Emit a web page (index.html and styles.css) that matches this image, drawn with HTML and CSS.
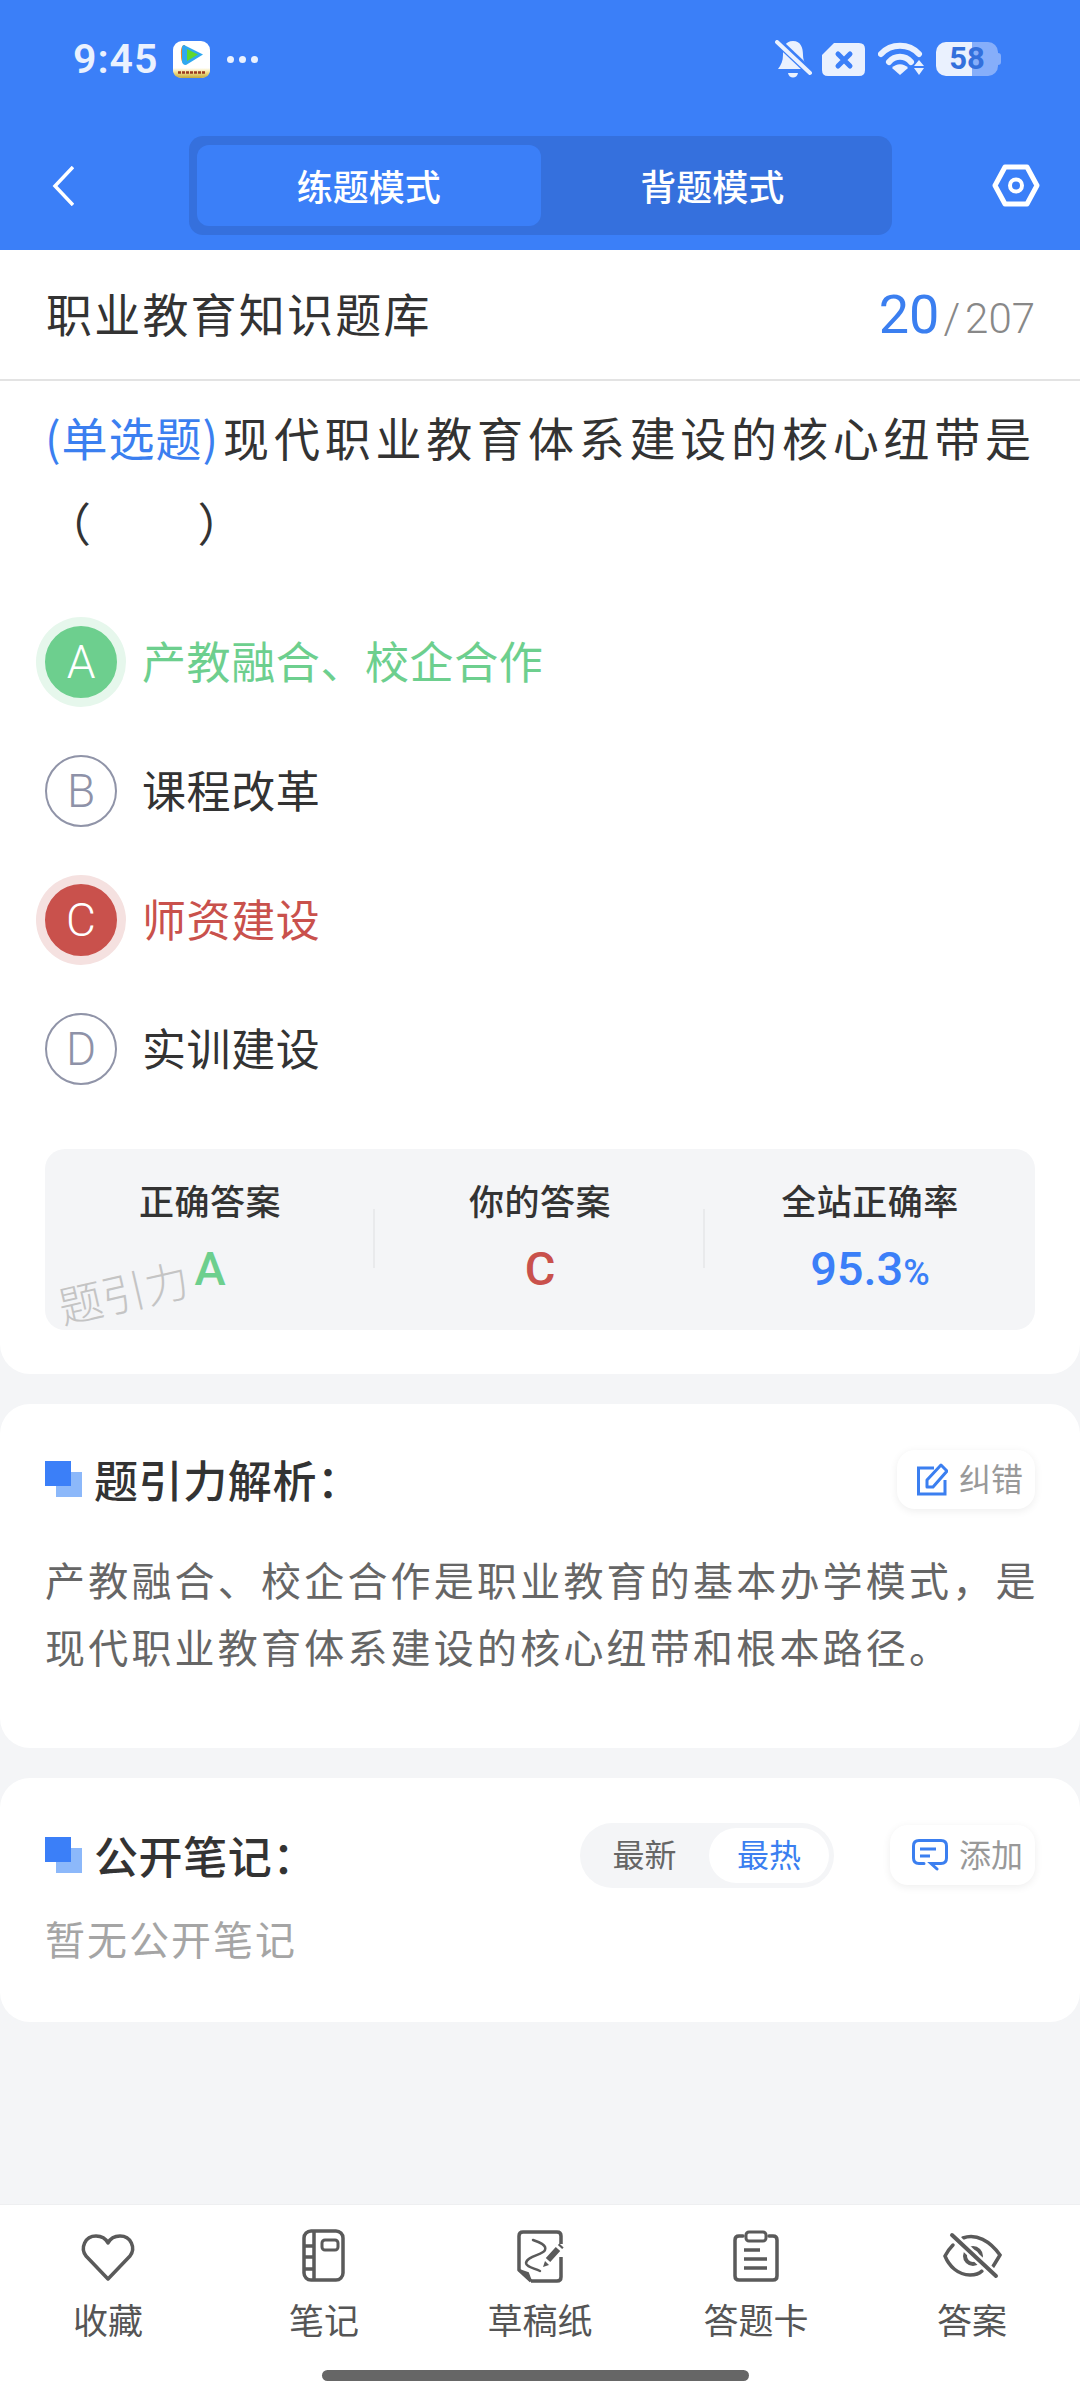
FILE: index.html
```html
<!DOCTYPE html>
<html lang="zh-CN">
<head>
	<meta charset="utf-8">
	<title>职业教育知识题库</title>
	<link rel="stylesheet" href="styles.css">
</head>
<body>
<div class="page">
	<div class="header">
		<div class="status-bar">
			<span class="time">9:45</span>
			<svg class="app-icon" viewBox="0 0 37 37">
				<defs>
					<linearGradient id="strip" x1="0" y1="0" x2="0" y2="1">
						<stop offset="0" stop-color="#fff"/>
						<stop offset="0.45" stop-color="#f3e08a"/>
						<stop offset="1" stop-color="#c2a83c"/>
					</linearGradient>
				</defs>
				<rect width="37" height="37" rx="9" fill="#fff"/>
				<path d="M0 27H37V29C37 34 33 37 28 37H9C4 37 0 34 0 29Z" fill="url(#strip)"/>
				<path d="M5 31.500H32" stroke="#9a3a20" stroke-width="2.500" stroke-dasharray="3 1"/>
				<path d="M12 4C7 4 8 12 8 14C8 18 8 23 14 23Z" fill="#f08a24"/>
				<path d="M11 4L30 13.5L13 24C10 24 9 22 9 20V7C9 5 10 4 11 4Z" fill="#2fa8f0"/>
				<path d="M14 8L25 13.5L14 20Z" fill="#5fd82e"/>
			</svg>
			<div class="status-dots"><i></i><i></i><i></i></div>
			<div class="status-right">
				<svg class="bell-icon" viewBox="0 0 37 39">
					<path d="M18 1C26 1 28 8 28 15C28 21 31 25 34 29H3C6 25 8 21 8 15C8 8 10 1 18 1Z" fill="#eaf1fe"/>
					<path d="M13 33H23C22 39 14 39 13 33Z" fill="#eaf1fe"/>
					<path d="M1 0L37 34" stroke="#3b7ff8" stroke-width="8"/>
					<path d="M2 2L35 33" stroke="#eaf1fe" stroke-width="4" stroke-linecap="round"/>
				</svg>
				<svg class="sim-icon" viewBox="0 0 43 33">
					<path d="M12 0H37Q43 0 43 6V27Q43 33 37 33H6Q0 33 0 27V12Z" fill="#eaf1fe"/>
					<path d="M16 11L28 23M28 11L16 23" stroke="#3b7ff8" stroke-width="5" stroke-linecap="round"/>
				</svg>
				<svg class="wifi-icon" viewBox="0 0 47 34">
					<path d="M3 12C13 1 31 1 41 12" fill="none" stroke="#eaf1fe" stroke-width="6" stroke-linecap="round"/>
					<path d="M11 20C17 13 27 13 33 20" fill="none" stroke="#eaf1fe" stroke-width="6" stroke-linecap="round"/>
					<path d="M22 33L14 26C18 21 26 21 30 26Z" fill="#eaf1fe"/>
					<path d="M41 18L46 24H36ZM36 26H46L41 33Z" fill="#eaf1fe"/>
				</svg>
				<div class="battery">58</div>
			</div>
		</div>
		<div class="nav-bar">
			<svg class="back-icon" viewBox="0 0 22 40">
				<path d="M21 1L3 20L21 39" fill="none" stroke="#fff" stroke-width="3.5"/>
			</svg>
			<div class="mode-switch">
				<div class="mode-item active">练题模式</div>
				<div class="mode-item">背题模式</div>
			</div>
			<svg class="settings-icon" viewBox="0 0 48 43">
				<path d="M13 3H35L45 21.5L35 40H13L3 21.5Z" fill="none" stroke="#fff" stroke-width="5" stroke-linejoin="round"/>
				<circle cx="24" cy="21.5" r="6" fill="none" stroke="#fff" stroke-width="4"/>
			</svg>
		</div>
	</div>

	<div class="info-row">
		<div class="bank-name">职业教育知识题库</div>
		<div class="progress"><span class="progress-now">20</span><span class="progress-sep">/</span><span class="progress-total">207</span></div>
	</div>

	<div class="card question-card">
		<div class="question"><span class="question-type">(单选题)</span>现代职业教育体系建设的核心纽带是<br>（　　）</div>
		<div class="options">
			<div class="option right">
				<div class="option-mark">A</div>
				<div class="option-text">产教融合、校企合作</div>
			</div>
			<div class="option">
				<div class="option-mark">B</div>
				<div class="option-text">课程改革</div>
			</div>
			<div class="option wrong">
				<div class="option-mark">C</div>
				<div class="option-text">师资建设</div>
			</div>
			<div class="option">
				<div class="option-mark">D</div>
				<div class="option-text">实训建设</div>
			</div>
		</div>
		<div class="stats">
			<div class="stat">
				<div class="stat-label">正确答案</div>
				<div class="stat-value green">A</div>
			</div>
			<div class="stat">
				<div class="stat-label">你的答案</div>
				<div class="stat-value red">C</div>
			</div>
			<div class="stat">
				<div class="stat-label">全站正确率</div>
				<div class="stat-value blue">95.3<small>%</small></div>
			</div>
			<div class="watermark">题引力</div>
		</div>
	</div>

	<div class="card analysis-card">
		<div class="section-head">
			<div class="section-title">题引力解析：</div>
			<div class="small-btn">
				<svg class="edit-icon" viewBox="0 0 31 34">
					<path d="M17 6H1.5V32H28V18" fill="none" stroke="#3b7ff0" stroke-width="3"/>
					<path d="M10 25V18L24 3L30 9L16 25Z" fill="none" stroke="#3b7ff0" stroke-width="3" stroke-linejoin="round"/>
				</svg>
				<span>纠错</span>
			</div>
		</div>
		<p class="analysis-text">产教融合、校企合作是职业教育的基本办学模式，是现代职业教育体系建设的核心纽带和根本路径。</p>
	</div>

	<div class="card notes-card">
		<div class="section-head">
			<div class="section-title">公开笔记：</div>
			<div class="sort-switch">
				<div class="sort-item">最新</div>
				<div class="sort-item active">最热</div>
			</div>
			<div class="small-btn add-btn">
				<svg class="add-icon" viewBox="0 0 36 32">
					<path d="M7 1.5H29Q34.500 1.500 34.500 7V19Q34.500 24.500 29 24.500H19L25 30M12 24.500H7Q1.500 24.500 1.500 19V7Q1.500 1.500 7 1.500" fill="none" stroke="#3b7ff0" stroke-width="3" stroke-linecap="round"/>
					<path d="M8 10H24M8 17H18" stroke="#3b7ff0" stroke-width="3"/>
				</svg>
				<span>添加</span>
			</div>
		</div>
		<div class="notes-empty">暂无公开笔记</div>
	</div>

	<div class="spacer"></div>

	<div class="tab-bar">
		<div class="tabs">
			<div class="tab">
				<svg class="tab-icon" viewBox="0 0 60 56">
					<path d="M30 50L8 27C2 19 7 7 18 7C24 7 28 10 30 14C32 10 36 7 42 7C53 7 58 19 52 27Z" fill="none" stroke="#5a5a5a" stroke-width="3.500" stroke-linejoin="round"/>
				</svg>
				<div class="tab-label">收藏</div>
			</div>
			<div class="tab">
				<svg class="tab-icon" viewBox="0 0 60 56">
					<rect x="10" y="2" width="39" height="49" rx="7" fill="none" stroke="#5a5a5a" stroke-width="3.500"/>
					<path d="M20 2V51M10 17H20M10 28H20M10 40H20" stroke="#5a5a5a" stroke-width="3.500"/>
					<rect x="28" y="11" width="16" height="10" rx="3" fill="none" stroke="#5a5a5a" stroke-width="3"/>
				</svg>
				<div class="tab-label">笔记</div>
			</div>
			<div class="tab">
				<svg class="tab-icon" viewBox="0 0 60 56">
					<path d="M21 52H47Q51 52 51 48V28M51 15V7Q51 3 47 3H13Q9 3 9 7V41L21 52" fill="none" stroke="#5a5a5a" stroke-width="3.500" stroke-linejoin="round"/>
					<path d="M9 41L18 44L21 52Z" fill="#5a5a5a" stroke="#5a5a5a" stroke-width="2"/>
					<path d="M23 11C29 13 37 16 35 21C33 26 17 27 16 34C16 38 24 39 30 42" fill="none" stroke="#5a5a5a" stroke-width="2.500" stroke-linecap="round"/>
					<path d="M38 31L48 20M50 18L51.500 16.500" stroke="#5a5a5a" stroke-width="6"/>
					<path d="M33 38L35 32L39 36Z" fill="#5a5a5a"/>
				</svg>
				<div class="tab-label">草稿纸</div>
			</div>
			<div class="tab">
				<svg class="tab-icon" viewBox="0 0 60 56">
					<path d="M17 7H13Q9 7 9 11V47Q9 51 13 51H47Q51 51 51 47V11Q51 7 47 7H43" fill="none" stroke="#5a5a5a" stroke-width="3.500" stroke-linecap="round"/>
					<rect x="20" y="3" width="20" height="9" rx="3" fill="none" stroke="#5a5a5a" stroke-width="3"/>
					<path d="M18 21H34M18 30H41M18 39H41" stroke="#5a5a5a" stroke-width="3.500"/>
				</svg>
				<div class="tab-label">答题卡</div>
			</div>
			<div class="tab">
				<svg class="tab-icon" viewBox="0 0 60 56">
					<path d="M21 9C34 4 48 12 58 26C55 31 52 36 50 39" fill="none" stroke="#5a5a5a" stroke-width="3.500" stroke-linecap="round"/>
					<path d="M11 16C8 19 5 23 3 27C7 37 16 46 28 46C32 46 37 45 40 42" fill="none" stroke="#5a5a5a" stroke-width="3.500" stroke-linecap="round"/>
					<circle cx="31" cy="27" r="8" fill="none" stroke="#5a5a5a" stroke-width="4"/>
					<path d="M10 6L54 47" stroke="#fff" stroke-width="9"/>
					<path d="M10 6L54 47" stroke="#5a5a5a" stroke-width="4" stroke-linecap="round"/>
				</svg>
				<div class="tab-label">答案</div>
			</div>
		</div>
		<div class="home-bar"></div>
	</div>
</div>
</body>
</html>
```
FILE: styles.css
```css
* {
	box-sizing: border-box;
}

body {
	margin: 0;
	background-color: #f4f5f7;
	font-family: "Noto Sans CJK SC", "Noto Sans", sans-serif;
	color: #333;
}

.page {
	display: flex;
	flex-direction: column;
	width: 1080px;
	height: 2400px;
}

/* header */
.header {
	height: 250px;
	background-color: #3b7ff8;
}

.status-bar {
	display: flex;
	align-items: center;
	height: 136px;
	padding: 0 80px 18px 73px;
	color: #eaf1fe;
}

.time {
	font-family: Roboto, sans-serif;
	font-size: 41px;
	font-weight: 600;
	letter-spacing: 1px;
	line-height: 41px;
}

.app-icon {
	width: 37px;
	height: 37px;
	margin-left: 15px;
}

.status-dots {
	display: flex;
	gap: 5px;
	margin-left: 17px;
}

.status-dots i {
	width: 7px;
	height: 7px;
	border-radius: 50%;
	background-color: #eaf1fe;
}

.status-right {
	display: flex;
	align-items: center;
	margin-left: auto;
}

.bell-icon {
	width: 37px;
	height: 39px;
}

.sim-icon {
	width: 43px;
	height: 33px;
	margin-left: 10px;
}

.wifi-icon {
	width: 47px;
	height: 34px;
	margin-left: 13px;
}

.battery {
	position: relative;
	width: 62px;
	height: 34px;
	margin-left: 11px;
	margin-right: 2px;
	border-radius: 10px;
	background: linear-gradient(to right, #eaf1fe 36px, #86aefa 36px);
	font-family: Roboto, sans-serif;
	font-size: 31px;
	font-weight: 700;
	line-height: 34px;
	text-align: center;
	color: #3370dc;
}

.battery::after {
	content: "";
	position: absolute;
	top: 11px;
	right: -3px;
	width: 3px;
	height: 12px;
	border-radius: 0 3px 3px 0;
	background-color: #86aefa;
}

.nav-bar {
	display: flex;
	align-items: center;
	padding: 0 40px 0 52px;
}

.back-icon {
	width: 22px;
	height: 40px;
}

.mode-switch {
	display: flex;
	width: 703px;
	height: 99px;
	margin-left: 115px;
	padding: 9px 8px;
	border-radius: 14px;
	background-color: #3570dd;
}

.mode-item {
	flex: 1;
	border-radius: 12px;
	font-size: 36px;
	font-weight: 500;
	line-height: 81px;
	text-align: center;
	color: #fff;
}

.mode-item.active {
	background-color: #3b7ff8;
}

.settings-icon {
	width: 48px;
	height: 43px;
	margin-left: auto;
}

/* title row */
.info-row {
	display: flex;
	align-items: center;
	justify-content: space-between;
	height: 131px;
	padding: 0 45px 0 46px;
	border-bottom: 2px solid #e3e3e3;
	background-color: #fff;
}

.bank-name {
	margin-bottom: 5px;
	font-size: 46px;
	letter-spacing: 2.2px;
}

.progress {
	display: flex;
	align-items: baseline;
	font-family: Roboto, sans-serif;
	font-weight: 300;
	color: #888;
}

.progress-now {
	font-size: 54px;
	font-weight: 400;
	color: #3b7ff0;
}

.progress-sep {
	margin: 0 5px 0 4px;
	font-size: 42px;
}

.progress-total {
	font-size: 42px;
}

/* cards */
.card {
	border-radius: 30px;
	background-color: #fff;
}

.question-card {
	height: 993px;
	padding: 13px 45px 0;
	border-radius: 0 0 30px 30px;
}

.question {
	font-size: 46px;
	letter-spacing: 4.8px;
	line-height: 85px;
	white-space: nowrap;
}

.question-type {
	margin-right: 4px;
	color: #3b7ff0;
	letter-spacing: 1px;
}

.options {
	display: flex;
	flex-direction: column;
	gap: 57px;
	margin-top: 62px;
}

.option {
	display: flex;
	align-items: center;
	gap: 25px;
}

.option-mark {
	width: 72px;
	height: 72px;
	border: 2px solid #9094a8;
	border-radius: 50%;
	font-family: Roboto, sans-serif;
	font-size: 46px;
	font-weight: 300;
	line-height: 68px;
	text-align: center;
	color: #8e92a8;
}

.option-text {
	margin-bottom: 4px;
	font-size: 44px;
	letter-spacing: 0.6px;
}

.option.right .option-mark {
	border-color: #6dcf8e;
	background-color: #6dcf8e;
	box-shadow: 0 0 0 9px #e6f7ec;
	color: #fff;
}

.option.right .option-text {
	color: #6dcf8e;
}

.option.wrong .option-mark {
	border-color: #c9514c;
	background-color: #c9514c;
	box-shadow: 0 0 0 9px #f5e1e0;
	color: #fff;
}

.option.wrong .option-text {
	color: #c9514c;
}

.stats {
	position: relative;
	display: flex;
	height: 181px;
	margin-top: 64px;
	border-radius: 20px;
	background-color: #f4f5f7;
}

.stat {
	flex: 1;
	padding-top: 26px;
	text-align: center;
	background: linear-gradient(#e9eaec, #e9eaec) no-repeat right 60px / 2px 59px;
}

.stat:nth-child(3) {
	background: none;
}

.stat-label {
	font-size: 35px;
	font-weight: 500;
	letter-spacing: 0.5px;
	line-height: 50px;
}

.stat-value {
	margin-top: 17px;
	font-family: Roboto, sans-serif;
	font-size: 47px;
	font-weight: 500;
	line-height: 54px;
}

.stat-value small {
	font-size: 36px;
}

.green {
	color: #6dcf8e;
}

.red {
	color: #c9514c;
}

.blue {
	color: #3b7ff8;
}

.watermark {
	position: absolute;
	top: 117px;
	left: 12px;
	font-size: 44px;
	font-weight: 300;
	line-height: 50px;
	color: #c4c4c4;
	transform: rotate(-13deg);
}

.analysis-card {
	height: 344px;
	margin-top: 30px;
	padding: 45px 45px 0;
}

.notes-card {
	height: 244px;
	margin-top: 30px;
	padding: 47px 45px 0;
}

.section-head {
	display: flex;
	align-items: center;
	height: 60px;
}

.section-title {
	position: relative;
	padding-left: 49px;
	font-size: 44px;
	font-weight: 500;
	letter-spacing: 0.6px;
	line-height: 60px;
}

.section-title::before,
.section-title::after {
	content: "";
	position: absolute;
	left: 0;
	width: 26px;
	height: 25px;
}

.section-title::after {
	top: 12px;
	background-color: #3b7ff8;
}

.section-title::before {
	top: 23px;
	left: 11px;
	background-color: #8cb8fa;
}

.small-btn {
	display: flex;
	align-items: center;
	justify-content: flex-end;
	gap: 11px;
	width: 138px;
	height: 59px;
	margin-left: auto;
	padding-right: 12px;
	border-radius: 18px;
	background-color: #fff;
	box-shadow: 0 2px 8px rgba(0, 0, 0, 0.07);
	font-size: 32px;
	color: #999;
}

.small-btn span {
	margin-bottom: 4px;
}

.edit-icon {
	width: 31px;
	height: 34px;
}

.analysis-text {
	margin: 37px -10px 0 0;
	font-size: 40px;
	letter-spacing: 3.2px;
	line-height: 67px;
	color: #666;
}

.sort-switch {
	display: flex;
	align-items: center;
	width: 254px;
	height: 65px;
	margin-left: auto;
	padding: 5px 5px 5px 0;
	border-radius: 33px;
	background-color: #f4f5f7;
}

.sort-item {
	width: 129px;
	padding-bottom: 4px;
	font-size: 32px;
	line-height: 51px;
	text-align: center;
	color: #666;
}

.sort-item.active {
	width: 120px;
	border-radius: 28px;
	background-color: #fff;
	color: #3b7ff0;
}

.add-btn {
	width: 145px;
	height: 60px;
	margin-left: 56px;
}

.add-icon {
	width: 36px;
	height: 32px;
}

.notes-empty {
	margin-top: 24px;
	font-size: 40px;
	letter-spacing: 2px;
	line-height: 58px;
	color: #a5a5a5;
}

.spacer {
	flex: 1;
}

/* bottom tabs */
.tab-bar {
	height: 196px;
	border-top: 1px solid #eeeff1;
	background-color: #fff;
}

.tabs {
	display: grid;
	grid-template-columns: repeat(5, 216px);
	padding-top: 24px;
}

.tab {
	display: flex;
	flex-direction: column;
	align-items: center;
}

.tab-icon {
	width: 60px;
	height: 56px;
}

.tab-label {
	margin-top: 9px;
	font-size: 35px;
	line-height: 50px;
	color: #555;
}

.home-bar {
	width: 427px;
	height: 11px;
	margin: 26px 0 0 322px;
	border-radius: 6px;
	background-color: #666;
}
```
